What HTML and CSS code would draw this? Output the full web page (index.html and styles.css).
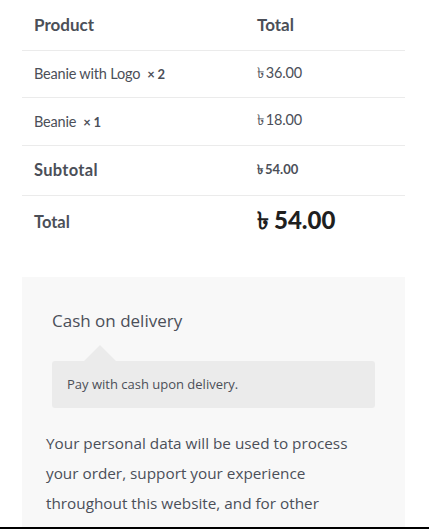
FILE: index.html
```html
<!DOCTYPE html>
<html lang="en">
<head>
<meta charset="utf-8">
<title>Order review</title>
<link rel="stylesheet" href="styles.css">
</head>
<body>
<div class="frame">
  <div class="review">
    <table class="order">
      <thead>
        <tr class="head-row">
          <th class="col-name">Product</th>
          <th class="col-total">Total</th>
        </tr>
      </thead>
      <tbody>
        <tr class="item-row">
          <td class="col-name">Beanie with Logo&nbsp; <strong class="qty">× 2</strong></td>
          <td class="col-total"><span class="cur">৳</span>36.00</td>
        </tr>
        <tr class="item-row">
          <td class="col-name">Beanie&nbsp; <strong class="qty">× 1</strong></td>
          <td class="col-total"><span class="cur">৳</span>18.00</td>
        </tr>
      </tbody>
      <tfoot>
        <tr class="sub-row">
          <th class="col-name">Subtotal</th>
          <td class="col-total sub-amt"><span class="cur">৳</span>54.00</td>
        </tr>
        <tr class="total-row">
          <th class="col-name">Total</th>
          <td class="col-total total-amt"><span class="cur">৳</span>54.00</td>
        </tr>
      </tfoot>
    </table>

    <div class="payment">
      <div class="method">
        <div class="method-label">Cash on delivery</div>
        <div class="method-box">Pay with cash upon delivery.</div>
      </div>
      <p class="privacy">Your personal data will be used to process your order, support your experience throughout this website, and for other purposes described in our privacy policy.</p>
    </div>
  </div>
</div>
</body>
</html>
```

FILE: styles.css
```css
html, body {
  margin: 0;
  padding: 0;
  background: #ffffff;
}

.frame {
  height: 527px;
  overflow: hidden;
  border-bottom: 2px solid #000000;
}

.review {
  padding: 0 24px 0 22px;
}

.order {
  width: 100%;
  border-collapse: collapse;
  font-family: Lato, "Liberation Sans", sans-serif;
  color: #4b4f58;
  text-align: left;
}

.order th,
.order td {
  padding: 0;
  vertical-align: middle;
}

.order .col-name {
  width: 223px;
  padding-left: 12px;
}

.head-row {
  height: 50px;
}

.head-row th {
  font-size: 17px;
  font-weight: 700;
  padding-top: 0;
}

.item-row td,
.sub-row th,
.sub-row td,
.total-row th,
.total-row td {
  border-top: 1px solid #ebebeb;
}

.item-row {
  height: 47px;
  font-size: 14.5px;
}

.item-row + .item-row {
  height: 48px;
}

.item-row td {
  font-weight: 400;
  letter-spacing: -0.2px;
}

.qty {
  font-weight: 700;
  font-size: 13px;
}

.cur {
  margin-right: 2px;
}

.sub-row {
  height: 50px;
}

.sub-row th {
  font-size: 16.5px;
  font-weight: 700;
  letter-spacing: 0.3px;
}

.sub-amt {
  font-size: 13px;
  font-weight: 700;
}

.total-row {
  height: 54px;
}

.total-row th {
  font-size: 16.5px;
  font-weight: 700;
  padding-top: 0;
}

.total-amt {
  font-size: 24px;
  font-weight: 900;
  color: #1f1f1f;
  padding-bottom: 8px;
}

.total-amt .cur {
  margin-right: 5px;
}

.payment {
  margin-top: 28px;
  background: #f8f8f8;
  padding: 32px 30px 30px 24px;
  font-family: "Open Sans", "Liberation Sans", sans-serif;
  color: #4b4f58;
}

.method {
  padding-left: 6px;
}

.method-label {
  font-size: 17px;
  line-height: 24px;
  font-weight: 400;
}

.method-box {
  position: relative;
  margin-top: 28px;
  background: #ebebeb;
  border-radius: 3px;
  padding: 13px 15px 14px 15px;
  font-size: 13px;
  line-height: 20px;
}

.method-box::before {
  content: "";
  position: absolute;
  left: 32px;
  top: -16px;
  border-left: 16px solid transparent;
  border-right: 16px solid transparent;
  border-bottom: 16px solid #ebebeb;
}

.privacy {
  margin: 20px 0 0 0;
  font-size: 15.3px;
  line-height: 30px;
}
```
